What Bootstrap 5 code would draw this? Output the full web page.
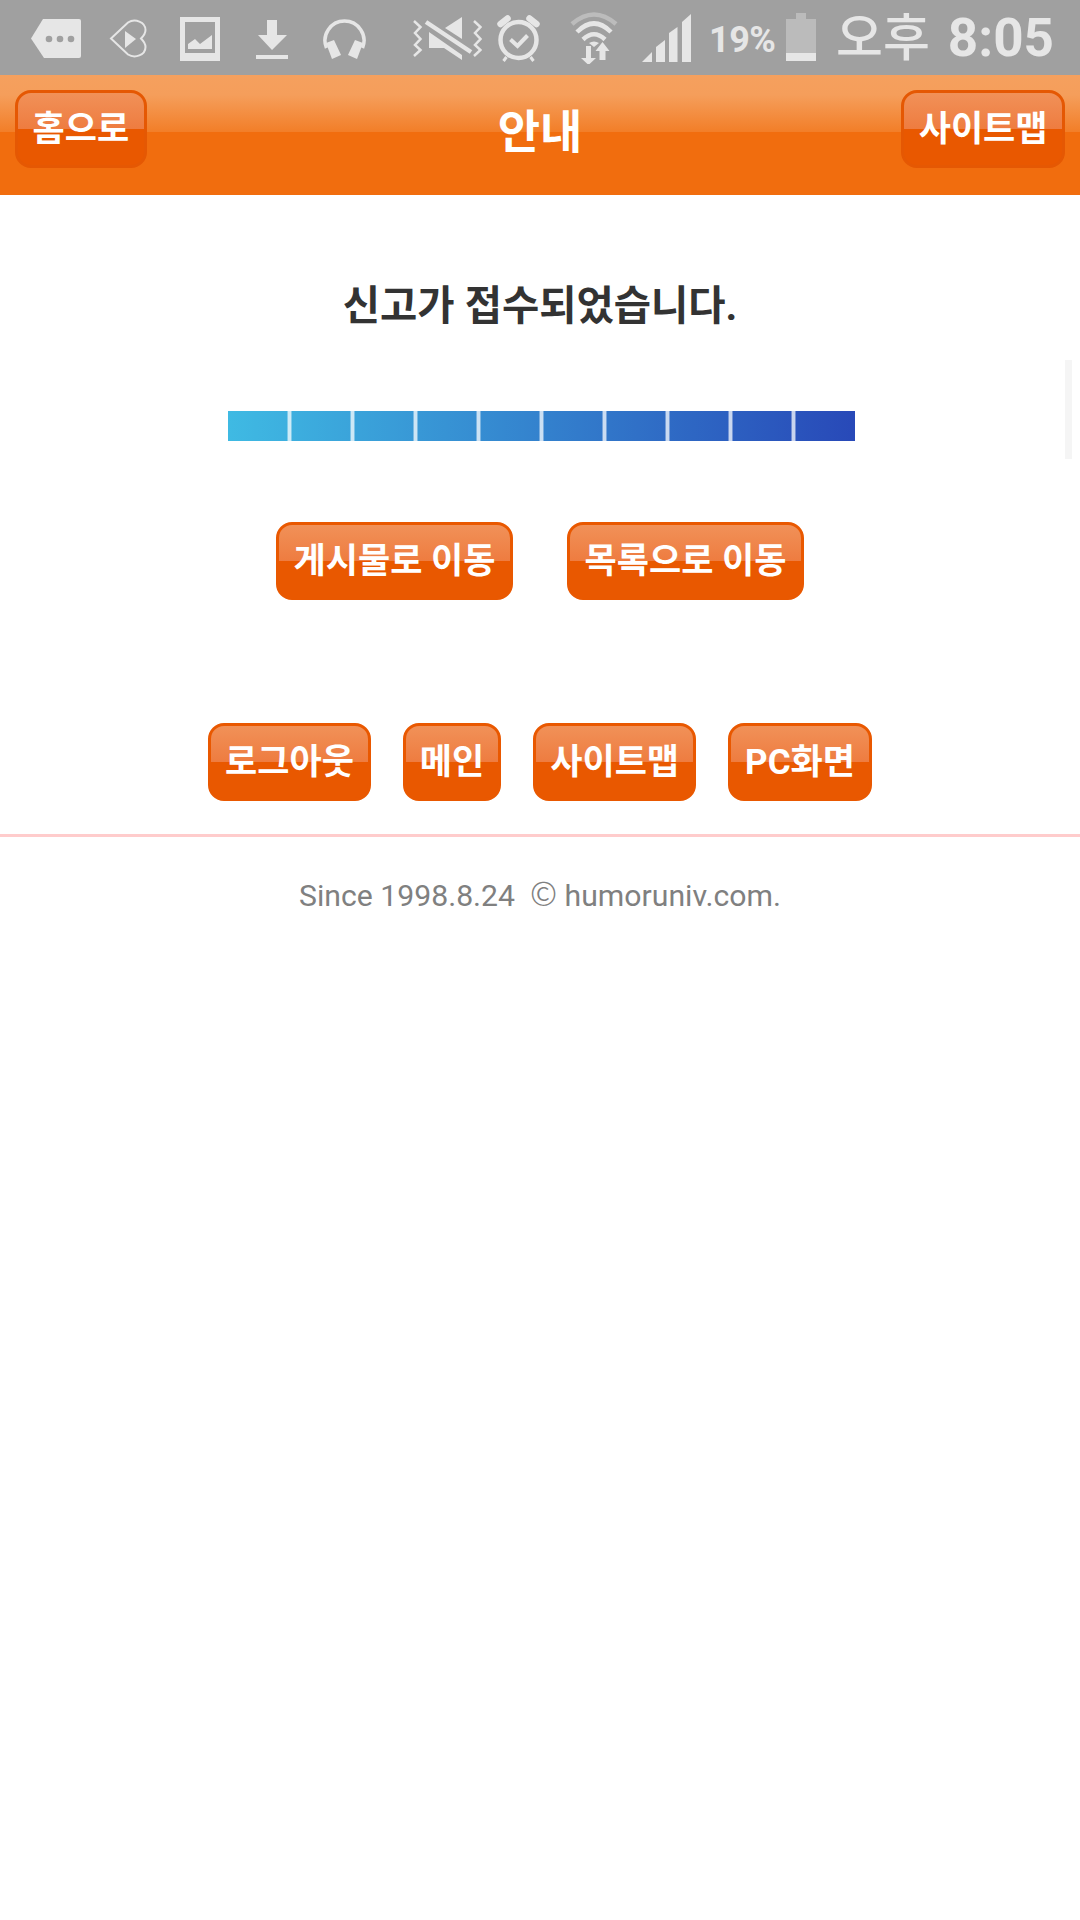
<!DOCTYPE html>
<html lang="ko">
<head>
  <meta charset="UTF-8" />
  <meta name="viewport" content="width=device-width, initial-scale=1" />
  <title>안내</title>
  <link href="https://cdn.jsdelivr.net/npm/bootstrap@5.3.2/dist/css/bootstrap.min.css" rel="stylesheet" />
  <style>
    html, body {
      height: 100%;
      margin: 0;
      background: #fff;
      font-family: "Roboto", "Noto Sans CJK KR", sans-serif;
    }
    /* 상태바 */
    .status-strip {
      height: 75px;
      background: #a0a0a0;
      color: #e6e6e6;
      padding-left: 31px;
    }
    .status-strip svg { display: block; flex: none; fill: #e6e6e6; }
    #icoTag { margin-top: 19px; }
    #icoHeart { margin: 19px 0 0 28px; }
    #icoPic { margin: 17px 0 0 33px; }
    #icoDown { margin: 20px 0 0 36px; }
    #icoPhones { margin: 19px 0 0 35px; }
    #icoMute { margin: 17px 0 0 46px; }
    #icoAlarm { margin: 15px 0 0 15px; }
    #icoWifi { margin: 12px 0 0 29px; }
    #icoSignal { margin: 14px 0 0 23px; }
    #icoBatt { margin: 13px 0 0 9px; }
    .batt-pct {
      margin: 18px 0 0 18px;
      width: 68px;
      font-size: 36px;
      line-height: 44px;
      font-weight: 700;
      letter-spacing: -0.5px;
      white-space: nowrap;
    }
    .clock-text {
      margin: 7px 0 0 20px;
      font-size: 53px;
      line-height: 62px;
      font-weight: 700;
      white-space: nowrap;
    }
    .clock-text span { font-weight: 500; margin-right: 18px; font-size: 51px; }
    /* 헤더 */
    .top-head {
      height: 120px;
      padding: 15px 15px 0;
      display: grid;
      grid-template-columns: 1fr auto 1fr;
      background: linear-gradient(#f5a05e 0, #f59e5b 20px, #f27e28 57px, #f16d0e 57px, #f16d0e 100%);
    }
    .top-title {
      margin: 0;
      height: 84px;
      line-height: 84px;
      font-size: 46px;
      font-weight: 700;
      color: #fff;
      text-align: center;
    }
    .btn.gloss-btn {
      height: 78px;
      padding: 0 15px;
      display: inline-flex;
      align-items: center;
      justify-content: center;
      border: 3px solid #e95800;
      border-radius: 16px;
      background: linear-gradient(#f19158 0, #ee7c40 50%, #e95800 50%, #e95800 100%);
      color: #fff;
      font-size: 35px;
      line-height: 1;
      font-weight: 700;
      white-space: nowrap;
    }
    .top-head .gloss-btn { border-color: #e55803; padding: 0 14.5px; }
    .notice-text {
      margin: 0;
      padding-top: 81px;
      line-height: 60px;
      height: 141px;
      font-size: 40.5px;
      font-weight: 700;
      color: #333;
      text-align: center;
    }
    .step-bar {
      width: 627px;
      height: 30px;
      margin: 75px 0 0 228px;
      background: linear-gradient(90deg, #3fbae3, #2849b8);
    }
    .step-bar div {
      flex: 1;
      border-right: 3px solid rgba(255, 255, 255, 0.75);
      box-shadow: inset -1px 0 0 rgba(255, 255, 255, 0.35), 1px 0 0 rgba(255, 255, 255, 0.35);
    }
    .step-bar div:last-child { border-right: 0; box-shadow: none; }
    .move-row { margin-top: 81px; gap: 54px; }
    .move-row .gloss-btn { width: 237px; }
    .menu-row { margin-top: 123px; gap: 32px; }
    .menu-row .gloss-btn { padding: 0 14px; }
    .pink-line { height: 3px; margin-top: 33px; background: #ffcccc; }
    .foot-text {
      margin: 0;
      height: 80px;
      padding-top: 39px;
      line-height: 40px;
      font-size: 30.2px;
      color: #808080;
      text-align: center;
    }
    .foot-text span {
      font-family: "Noto Sans CJK KR", sans-serif;
      font-weight: 300;
      font-size: 33px;
      line-height: 0;
    }
    .scroll-thumb {
      position: absolute;
      left: 1065px;
      top: 360px;
      width: 7px;
      height: 99px;
      background: #f5f5f5;
    }
  </style>
</head>
<body>
  <!-- 상태바 -->
  <div class="status-strip d-flex align-items-start">
    <svg id="icoTag" width="50" height="39" viewBox="0 0 50 39"><path d="M12 0H48a2 2 0 0 1 2 2V37a2 2 0 0 1-2 2H13L0 19.5Z"/><g fill="#a0a0a0"><circle cx="18" cy="20" r="3.3"/><circle cx="29" cy="20" r="3.3"/><circle cx="40" cy="20" r="3.3"/></g></svg>
    <svg id="icoHeart" width="38" height="39" viewBox="0 0 38 39"><path d="M2 19.5L19 3.5C26-1 36.5 3 36.5 11C36.5 15 34.5 17 32 19.5C34.5 22 36.5 24 36.5 28C36.5 36 26 40 19 35.5Z" fill="none" stroke="#e6e6e6" stroke-width="2"/><path d="M16 12L27 20L16 29Z"/></svg>
    <svg id="icoPic" width="40" height="44" viewBox="0 0 40 44"><path fill-rule="evenodd" d="M0 0H40V44H0ZM5 5V36H35V5Z"/><path d="M8 32V27L15 22L20 27L32 18V32Z"/></svg>
    <svg id="icoDown" width="32" height="39" viewBox="0 0 32 39"><path d="M11 0H21V15H31L16 30L2 15H11Z"/><rect y="35" width="32" height="4"/></svg>
    <svg id="icoPhones" width="43" height="41" viewBox="0 0 43 41"><path d="M3.5 29A19.5 19.5 0 1 1 39.5 29" fill="none" stroke="#e6e6e6" stroke-width="3.5"/><path d="M3 24L11 21L18 36L9 40Z"/><path d="M40 24L32 21L25 36L34 40Z"/></svg>
    <svg id="icoMute" width="70" height="44" viewBox="0 0 70 44"><path d="M33 11L50 0V22Z"/><path d="M17 15L50 38V43L32 31H17Z"/><path d="M14 5L59 35" stroke="#e6e6e6" stroke-width="4.5"/><path d="M2 4L8.5 10L3 16L8.5 22L3 28L8.5 33L2 39" fill="none" stroke="#e6e6e6" stroke-width="2.5"/><path d="M62 4L68.5 10L63 16L68.5 22L63 28L68.5 33L62 39" fill="none" stroke="#e6e6e6" stroke-width="2.5"/></svg>
    <svg id="icoAlarm" width="43" height="47" viewBox="0 0 43 47"><circle cx="21.5" cy="25" r="18" fill="none" stroke="#e6e6e6" stroke-width="4.5"/><path d="M3.5 9L10.5 3.5M39.5 9L32.5 3.5" stroke="#e6e6e6" stroke-width="6.5" stroke-linecap="round"/><path d="M9.5 42L6.5 46M33.5 42L36.5 46" stroke="#e6e6e6" stroke-width="3"/><path d="M13.5 24.5L20.5 31L30.5 20.5" fill="none" stroke="#e6e6e6" stroke-width="4"/></svg>
    <svg id="icoWifi" width="50" height="52" viewBox="0 0 50 52"><path d="M3 12Q25-7 47 12" fill="none" stroke="#bcbcbc" stroke-width="4.5"/><path d="M8 20Q25 3 42 20" fill="none" stroke="#e6e6e6" stroke-width="4.5"/><path d="M14 27.5Q25 17 36 27.5" fill="none" stroke="#e6e6e6" stroke-width="4.5"/><path d="M20 31Q25 28 30 31L25 35Z"/><path d="M17 34H22V46H27L19.5 53L12 46H17Z"/><path d="M33.5 30L40.5 39H36.5V48H30.5V39H26.5Z"/></svg>
    <svg id="icoSignal" width="49" height="48" viewBox="0 0 49 48"><path d="M0 48L10 38V48Z"/><path d="M14 33L23 26V48H14Z"/><path d="M27 19L35.5 13V48H27Z"/><path d="M40 8L49 0V48H40Z"/></svg>
    <div class="batt-pct">19%</div>
    <svg id="icoBatt" width="30" height="48" viewBox="0 0 30 48"><path d="M10 0H20V6H30V40H0V6H10Z" fill="#bbb"/><rect y="40" width="30" height="8"/></svg>
    <div class="clock-text"><span>오후</span>8:05</div>
  </div>

  <!-- 헤더 -->
  <div class="top-head">
    <div><a class="btn gloss-btn" href="#">홈으로</a></div>
    <h1 class="top-title">안내</h1>
    <div class="text-end"><a class="btn gloss-btn" href="#">사이트맵</a></div>
  </div>

  <p class="notice-text">신고가 접수되었습니다.</p>

  <div class="step-bar d-flex">
    <div></div><div></div><div></div><div></div><div></div>
    <div></div><div></div><div></div><div></div><div></div>
  </div>

  <div class="move-row d-flex justify-content-center">
    <a class="btn gloss-btn" href="#">게시물로 이동</a>
    <a class="btn gloss-btn" href="#">목록으로 이동</a>
  </div>

  <div class="menu-row d-flex justify-content-center">
    <a class="btn gloss-btn" href="#">로그아웃</a>
    <a class="btn gloss-btn" href="#">메인</a>
    <a class="btn gloss-btn" href="#">사이트맵</a>
    <a class="btn gloss-btn" href="#">PC화면</a>
  </div>

  <div class="pink-line"></div>
  <p class="foot-text">Since 1998.8.24&nbsp;&nbsp;<span>©</span> humoruniv.com.</p>

  <div class="scroll-thumb"></div>

  <script src="https://cdn.jsdelivr.net/npm/bootstrap@5.3.2/dist/js/bootstrap.bundle.min.js"></script>
</body>
</html>
